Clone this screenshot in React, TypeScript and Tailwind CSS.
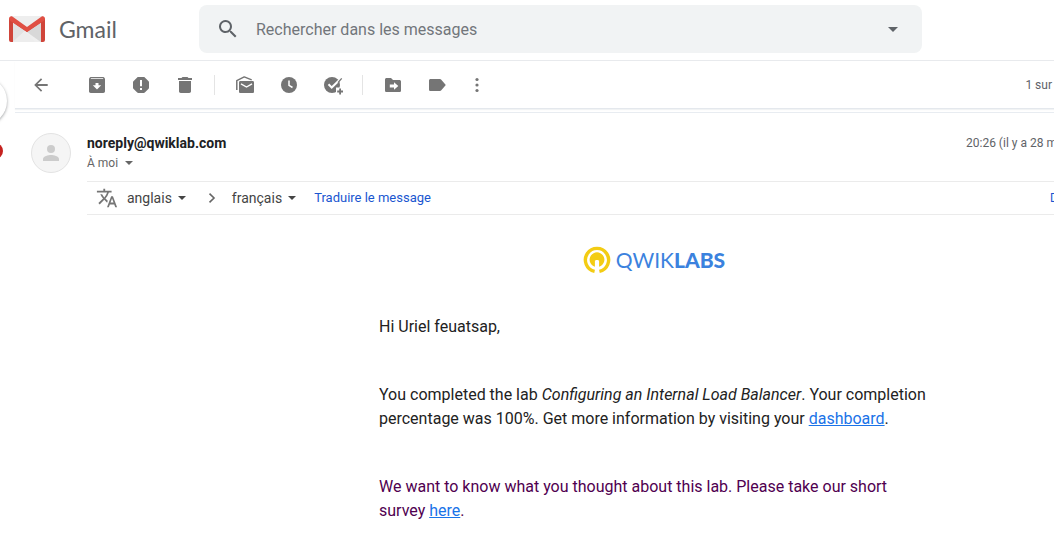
import type { ReactNode } from "react";

function Icon({ children, className = "" }: { children: ReactNode; className?: string }) {
  return (
    <svg viewBox="0 0 20 20" className={`size-5 shrink-0 ${className}`} fill="currentColor" aria-hidden="true">
      {children}
    </svg>
  );
}

function Caret({ className = "" }: { className?: string }) {
  return (
    <svg viewBox="0 0 8 4" className={`h-1 w-2 shrink-0 ${className}`} fill="currentColor" aria-hidden="true">
      <path d="M0 0h8L4 4z" />
    </svg>
  );
}

function ToolButton({ label, children }: { label: string; children: ReactNode }) {
  return (
    <button type="button" aria-label={label} className="flex size-5 shrink-0 items-center justify-center">
      {children}
    </button>
  );
}

function GmailMark() {
  return (
    <svg viewBox="0 0 36 26" className="h-[26px] w-9 shrink-0" aria-hidden="true">
      <path d="M2 0h32v26H2z" fill="#e6e6e6" />
      <path d="M4 26V6l14 10L32 6v20z" fill="#e2e2e2" />
      <path d="M4 26 16 14.500 32 26z" fill="#efefef" />
      <path d="M18 16 32 6v20z" fill="#d8d8d8" />
      <path d="M4 26 16 15 26 26z" fill="#ededed" />
      <path d="M3 0h30L18 11z" fill="#eeeeee" />
      <path d="M0 2.400V24a2 2 0 0 0 2 2h2V6.500L18 16 32 6.500V26h2a2 2 0 0 0 2-2V2.400L34 4 18 14.500 2 4z" fill="#d0453a" />
      <path d="M0 2.500C0 .8 1.800-.5 3.300.5L18 10.900 32.700.5C34.200-.5 36 .8 36 2.500c0 1-.4 1.700-1.200 2.200L18 16 1.200 4.700C.4 4.200 0 3.500 0 2.500z" fill="#e04f43" />
    </svg>
  );
}

function Header() {
  return (
    <header className="flex items-start border-b border-[#e8eaed] pt-[5px] pb-[7px] pl-[9px]">
      <a href="#inbox" className="flex h-12 w-[190px] shrink-0 items-center gap-[14px]">
        <GmailMark />
        <span className="font-['Lato',sans-serif] text-[23px] leading-6 text-[#5f6368]">Gmail</span>
      </a>
      <form className="mr-[132px] flex h-12 flex-1 items-center rounded-lg bg-[#f1f3f4] pr-6 pl-[17px] text-[#5f6368]">
        <button type="button" aria-label="Rechercher" className="shrink-0">
          <svg viewBox="0 0 24 24" className="size-6" fill="currentColor" aria-hidden="true">
            <path d="M15.500 14h-.79l-.28-.27A6.500 6.500 0 1 0 13.730 14.430l.27.28v.79l5 4.990L20.490 19zM9.500 14a4.500 4.500 0 1 1 0-9 4.500 4.500 0 0 1 0 9z" />
          </svg>
        </button>
        <input
          type="text"
          aria-label="Rechercher dans les messages"
          placeholder="Rechercher dans les messages"
          className="ml-4 min-w-0 flex-1 bg-transparent pt-0.5 text-base outline-none placeholder:text-[#72767b]"
        />
        <button type="button" aria-label="Options de recherche" className="shrink-0">
          <svg viewBox="0 0 10 5" className="h-[5px] w-[10px]" fill="currentColor" aria-hidden="true">
            <path d="M0 0h10L5 5z" />
          </svg>
        </button>
      </form>
    </header>
  );
}

function Toolbar() {
  return (
    <div className="flex h-12 items-center border-b border-[#e4e8ed] pl-4 text-[#757575] shadow-[0_1px_1px_#f1f3f4]">
      <ToolButton label="Retour">
        <Icon>
          <path d="M16.700 9.100H6.500l4.700-4.700L10 3.200 3.200 10l6.800 6.800 1.200-1.200-4.700-4.700h10.200z" />
        </Icon>
      </ToolButton>
      <div className="ml-9 flex items-center gap-6">
        <ToolButton label="Archiver">
          <Icon>
            <path
              fillRule="evenodd"
              d="M3.700 2h12.600c.4 0 .7.200.9.500l.5.700c.2.300.3.600.3 1V16.300c0 .9-.8 1.700-1.700 1.700H3.700C2.800 18 2 17.200 2 16.300V4.200c0-.4.1-.7.300-1l.5-.7c.2-.3.500-.5.900-.5zM4 3.300l-.3.600h12.600l-.3-.6zM8.500 8v2.200H5.800L10 14.400l4.200-4.200h-2.700V8z"
            />
          </Icon>
        </ToolButton>
        <ToolButton label="Signaler comme spam">
          <Icon>
            <path
              fillRule="evenodd"
              d="M7.200 2h5.600c.4 0 .7.100 1 .4l3.800 3.800c.3.300.4.600.4 1v5.600c0 .4-.1.700-.4 1l-3.800 3.800c-.3.300-.6.400-1 .4H7.200c-.4 0-.7-.1-1-.4l-3.800-3.800c-.3-.3-.4-.6-.4-1V7.200c0-.4.1-.7.4-1l3.800-3.800c.3-.3.6-.4 1-.4zM9 5v6.200h2V5zm0 8v2h2v-2z"
            />
          </Icon>
        </ToolButton>
        <ToolButton label="Supprimer">
          <Icon>
            <path d="M13.500 3 12.500 2h-5l-1 1H3v2h14V3zM4 6v10.300C4 17.200 4.800 18 5.700 18h8.600c.9 0 1.700-.8 1.700-1.700V6z" />
          </Icon>
        </ToolButton>
      </div>
      <div className="mr-5 ml-[19px] h-5 w-px shrink-0 bg-[#e4e4e4]" />
      <div className="flex items-center gap-6">
        <ToolButton label="Marquer comme non lu">
          <Icon>
            <path d="M1.800 15V5.600L9.200 1.900l7.500 3" fill="none" stroke="currentColor" strokeWidth="1.500" strokeLinejoin="round" />
            <path d="M5.300 6h12.400c.7 0 1.300.6 1.300 1.300v9.400c0 .7-.6 1.300-1.300 1.300H5.300c-.7 0-1.300-.6-1.300-1.300V7.300C4 6.600 4.600 6 5.300 6z" />
            <path d="M6 8.800 11.500 12 17 8.800" fill="none" stroke="#fff" strokeWidth="1.400" />
          </Icon>
        </ToolButton>
        <ToolButton label="Mettre en attente">
          <Icon>
            <circle cx="10" cy="10" r="8" />
            <path d="M10 5.500v4.900l3.500 2.100" fill="none" stroke="#fff" strokeWidth="1.500" />
          </Icon>
        </ToolButton>
        <ToolButton label="Ajouter à Tasks">
          <Icon>
            <circle cx="9" cy="10" r="8" />
            <path d="M13 12.500h7v7h-7z" fill="#fff" />
            <path d="m5.500 9.300 3.200 3.200L19 2.500" fill="none" stroke="#fff" strokeWidth="2" />
            <path d="m15 7.600 3.700-4.300" fill="none" stroke="currentColor" strokeWidth="1.300" />
            <path d="M16.200 13.500h1.800v2.100h2v1.800h-2v2.100h-1.800v-2.100h-2v-1.800h2z" />
          </Icon>
        </ToolButton>
      </div>
      <div className="mr-5 ml-[19px] h-5 w-px shrink-0 bg-[#e4e4e4]" />
      <div className="flex items-center gap-6">
        <ToolButton label="Déplacer vers">
          <Icon>
            <path
              fillRule="evenodd"
              d="M3.600 3H8l2 2h6.400c.9 0 1.600.7 1.600 1.600v8.800c0 .9-.7 1.600-1.600 1.600H3.600C2.700 17 2 16.300 2 15.400V4.600C2 3.700 2.700 3 3.600 3zM11 7.200V9.500H6.800v3H11v2.300l4.300-3.800z"
            />
          </Icon>
        </ToolButton>
        <ToolButton label="Libellés">
          <Icon>
            <path d="M3.600 4h9.300c.6 0 1.100.3 1.400.7L18.800 10l-4.500 5.300c-.3.400-.8.700-1.400.7H3.600C2.700 16 2 15.300 2 14.400V5.600C2 4.700 2.700 4 3.600 4z" />
          </Icon>
        </ToolButton>
      </div>
      <div className="ml-5 flex">
        <ToolButton label="Plus">
          <Icon>
            <circle cx="10" cy="4.500" r="1.600" />
            <circle cx="10" cy="10" r="1.600" />
            <circle cx="10" cy="15.500" r="1.600" />
          </Icon>
        </ToolButton>
      </div>
      <span className="ml-auto shrink-0 pr-[2px] text-xs text-[#5f6368]">1 sur</span>
    </div>
  );
}

function TranslateBar() {
  return (
    <div className="flex h-[34px] items-center border-y border-[#ebebeb] text-sm text-[#444444]">
      <svg viewBox="0 0 24 24" className="ml-[9px] size-[22px] shrink-0" fill="#757575" aria-hidden="true">
        <path d="m12.870 15.070-2.540-2.510.03-.03A17.520 17.520 0 0 0 14.070 6H17V4h-7V2H8v2H1v1.990h11.170C11.500 7.920 10.440 9.750 9 11.350 8.070 10.320 7.300 9.190 6.690 8h-2c.73 1.630 1.730 3.170 2.980 4.560l-5.090 5.020L4 19l5-5 3.110 3.110zM18.500 10h-2L12 22h2l1.120-3h4.750L21 22h2zm-2.620 7 1.620-4.330L19.120 17z" />
      </svg>
      <button type="button" className="ml-[9px] flex items-center gap-[6px]">
        anglais <Caret />
      </button>
      <svg viewBox="0 0 8 10" className="ml-[22px] h-[10px] w-2 shrink-0" fill="none" stroke="#666" strokeWidth="1.600" aria-hidden="true">
        <path d="m1.500.7 4.500 4.300-4.500 4.300" />
      </svg>
      <button type="button" className="ml-4 flex items-center gap-[6px]">
        français <Caret />
      </button>
      <a href="#translate" className="ml-[18px] text-[13px] text-[#1a56d0]">
        Traduire le message
      </a>
      <a href="#disable" className="ml-auto w-1 overflow-hidden text-xs whitespace-nowrap text-[#1a56d0]">
        Désactiver
      </a>
    </div>
  );
}

function QwiklabsLogo() {
  return (
    <div className="flex items-center justify-center gap-[5px]">
      <svg viewBox="0 0 28 28" className="size-7 shrink-0" fill="none" aria-hidden="true">
        <path d="M11.600 25.300A11.600 11.600 0 1 1 16.400 25.300" stroke="#f3cc13" strokeWidth="3.400" />
        <path d="M11.900 20.800A7.400 7.400 0 1 1 16.100 20.800V14.500h-4.200z" fill="#f3cc13" />
        <path d="M12.700 14h2.600v14h-2.600z" fill="#fff" />
      </svg>
      <span className="font-['Lato',sans-serif] text-[21px] leading-6 font-normal text-[#3b82de]">
        QWIK<b className="font-black">LABS</b>
      </span>
    </div>
  );
}

function Message() {
  return (
    <article className="mt-[3px] border-t border-[#e8ecf1] pt-5 pl-4">
      <div className="flex items-start">
        <div className="flex size-10 shrink-0 items-center justify-center rounded-full border border-[#e3e3e3] bg-[#f5f5f5]">
          <svg viewBox="0 0 16 16" className="size-4" fill="#cccccc" aria-hidden="true">
            <circle cx="8" cy="4" r="4" />
            <path d="M0 16v-2c0-2.700 5.300-4 8-4s8 1.300 8 4v2z" />
          </svg>
        </div>
        <div className="ml-4 min-w-0 flex-1">
          <div className="flex items-center justify-between">
            <h1 className="text-sm leading-5 font-bold text-[#202124]">noreply@qwiklab.com</h1>
            <time className="w-[88px] shrink-0 overflow-hidden text-xs leading-5 whitespace-nowrap text-[#5f6368]">
              20:26 (il y a 28 minutes)
            </time>
          </div>
          <button type="button" className="flex items-center gap-[7px] text-xs leading-5 text-[#666666]">
            À moi <Caret />
          </button>
          <div className="mt-2">
            <TranslateBar />
          </div>
        </div>
      </div>
      <div className="mt-[31px] ml-[348px] w-[550px] text-base text-[#222222]">
        <QwiklabsLogo />
        <p className="mt-[41px]">Hi Uriel feuatsap,</p>
        <p className="mt-11">
          You completed the lab <em>Configuring an Internal Load Balancer</em>. Your completion percentage was 100%. Get
          more information by visiting your{" "}
          <a href="#dashboard" className="text-[#1a73e8] underline">
            dashboard
          </a>
          .
        </p>
        <p className="mt-11 text-[#500050]">
          We want to know what you thought about this lab. Please take our short survey{" "}
          <a href="#survey" className="text-[#1a73e8] underline">
            here
          </a>
          .
        </p>
      </div>
    </article>
  );
}

export default function App() {
  return (
    <div className="min-h-screen overflow-hidden bg-white font-['Roboto',sans-serif]">
      <Header />
      <div className="flex">
        <aside className="relative w-[15px] shrink-0">
          <div className="absolute top-4 right-2 size-12 rounded-full bg-white shadow-[0_1px_3px_rgba(60,64,67,0.5)]" />
          <div className="absolute top-[82px] right-3 size-4 rounded-full bg-[#c5221f]" />
        </aside>
        <main className="min-w-0 flex-1">
          <Toolbar />
          <Message />
        </main>
      </div>
    </div>
  );
}
